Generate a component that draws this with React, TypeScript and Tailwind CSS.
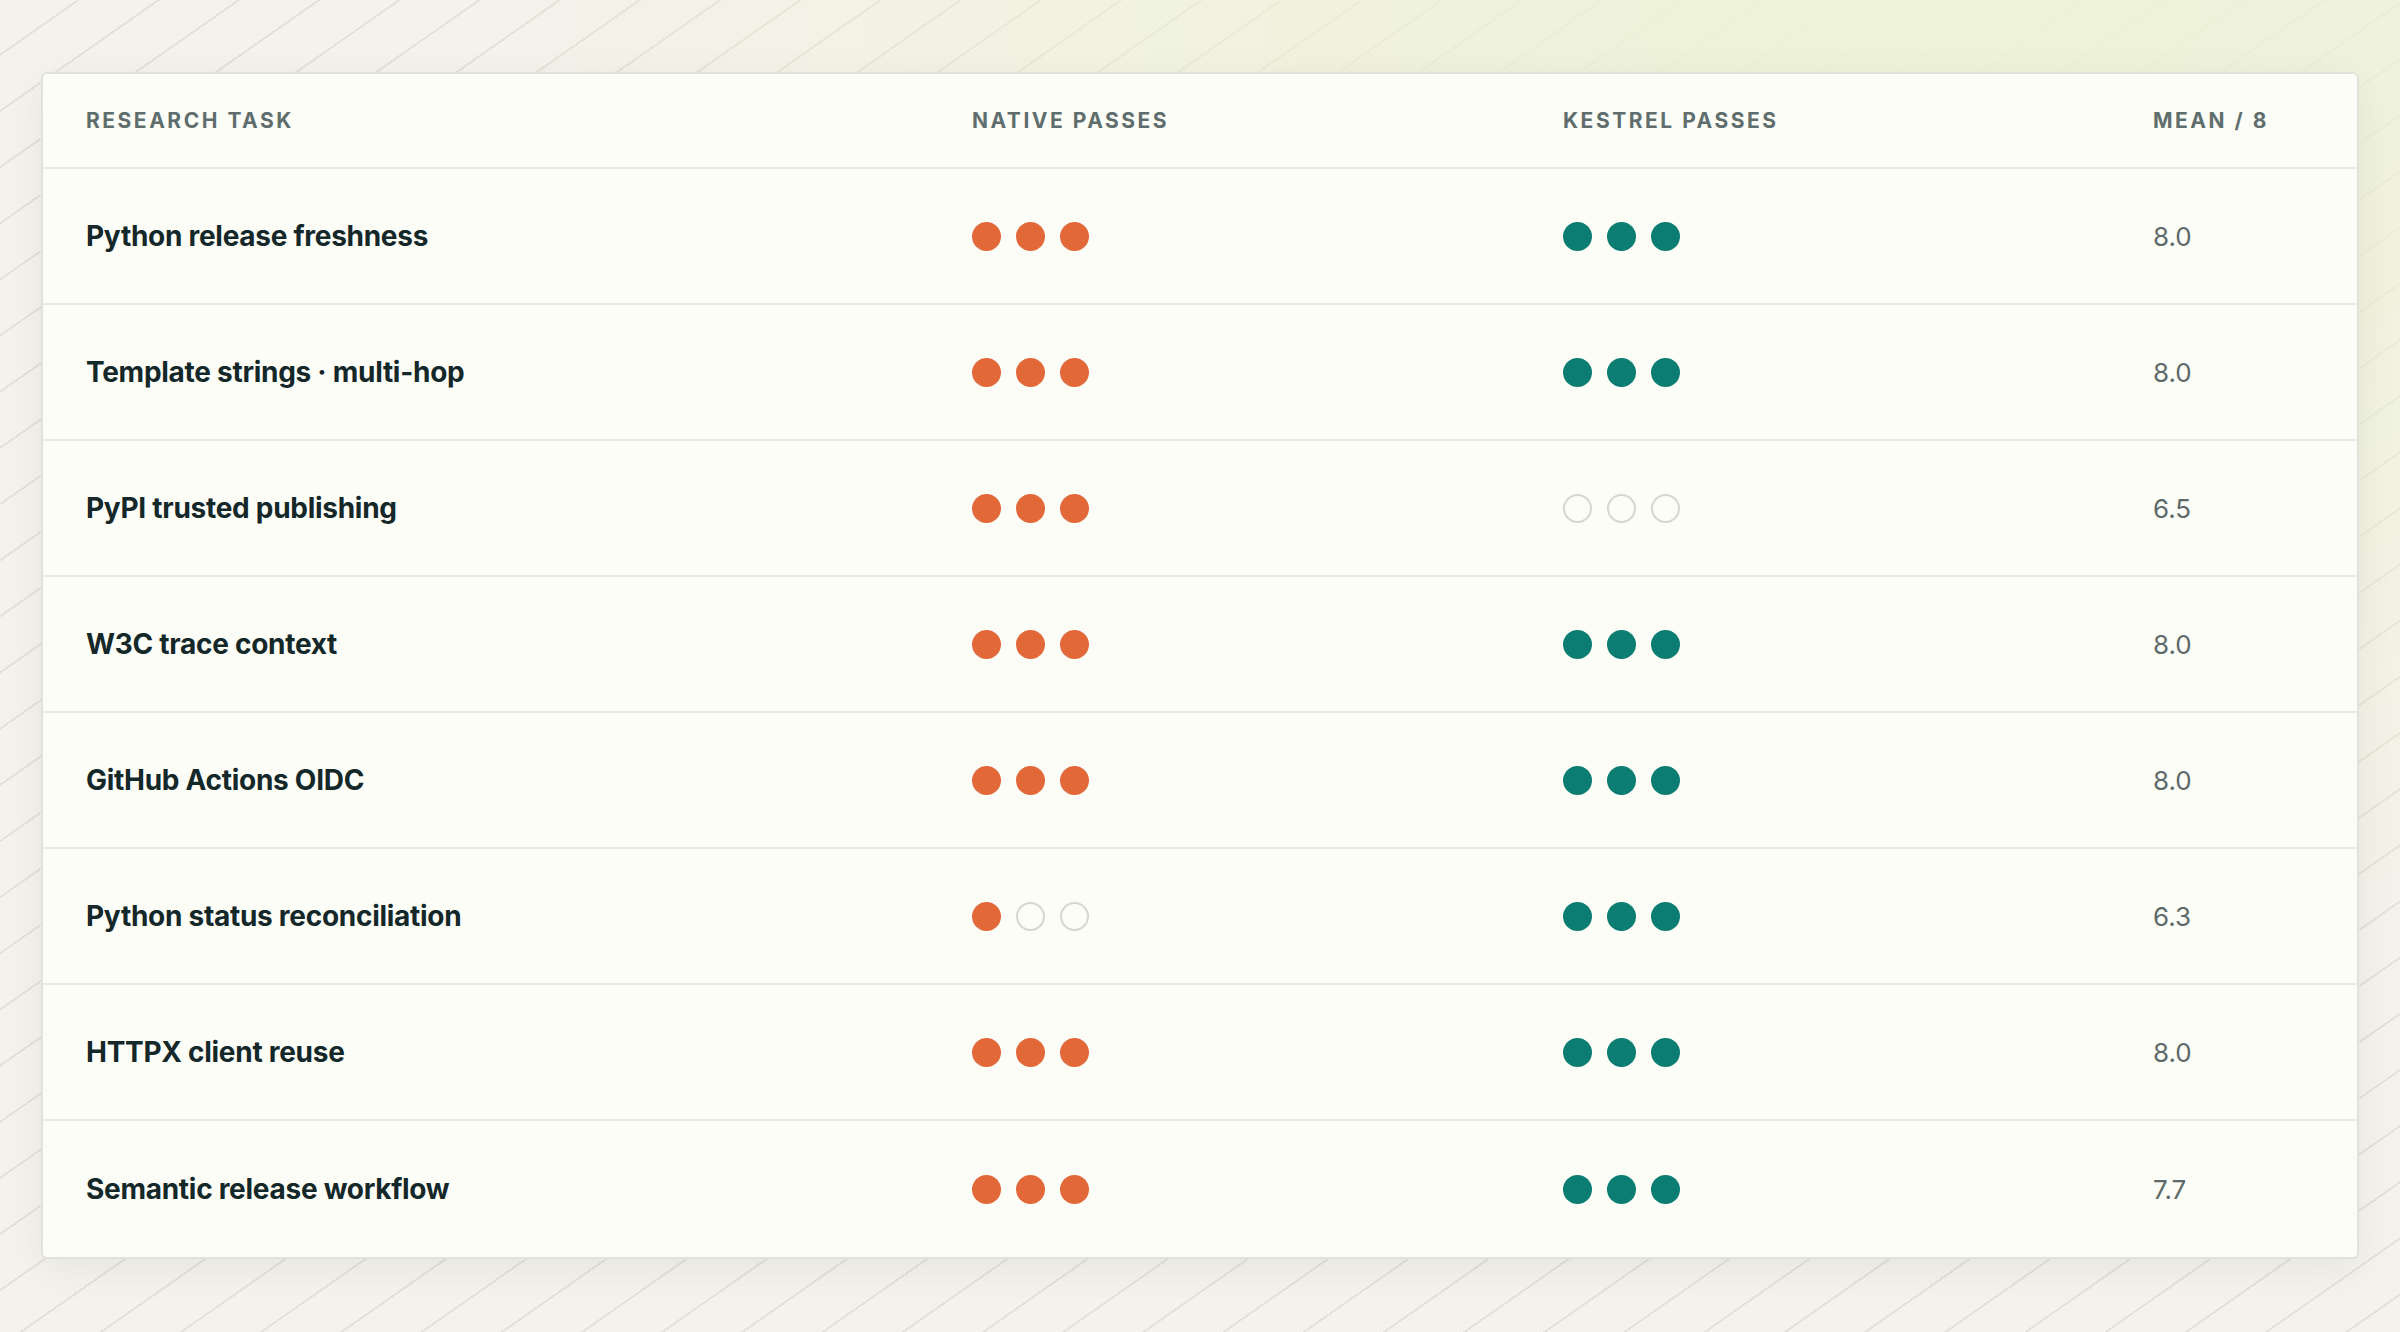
import React from "react";

const rows: [string, number, number, string][] = [
  ["Python release freshness", 3, 3, "8.0"],
  ["Template strings · multi-hop", 3, 3, "8.0"],
  ["PyPI trusted publishing", 3, 0, "6.5"],
  ["W3C trace context", 3, 3, "8.0"],
  ["GitHub Actions OIDC", 3, 3, "8.0"],
  ["Python status reconciliation", 1, 3, "6.3"],
  ["HTTPX client reuse", 3, 3, "8.0"],
  ["Semantic release workflow", 3, 3, "7.7"],
];

function Dots({ n, color }: { n: number; color: string }) {
  return (
    <div className="flex gap-[15px]">
      {[0, 1, 2].map((i) =>
        i < n ? (
          <span key={i} className="w-[29px] h-[29px] rounded-full" style={{ background: color }} />
        ) : (
          <span key={i} className="w-[29px] h-[29px] rounded-full border-2 border-[#d6d6d2]" />
        )
      )}
    </div>
  );
}

export default function App() {
  return (
    <div
      className="w-[2400px] h-[1332px] pt-[72px] px-[41px] bg-[#f4f2ec]"
      style={{ fontFamily: "Inter, 'Noto Sans', sans-serif" }}
    >
      <div className="absolute inset-0 w-[2400px] h-[1332px] pointer-events-none bg-[radial-gradient(ellipse_at_80%_0%,#eef2d6_0%,rgba(238,242,214,0.6)_25%,rgba(244,242,236,0)_55%),repeating-linear-gradient(145deg,transparent_0px,transparent_44px,rgba(150,150,130,0.18)_44px,rgba(150,150,130,0.18)_46px)]" />
      <div className="relative w-[2318px] rounded-[6px] border-2 border-[#e2e2dc] bg-[#fdfdf8] shadow-[0_10px_40px_rgba(0,0,0,0.06)] overflow-hidden">
        <div className="grid grid-cols-[886px_591px_590px_1fr] pl-[43px] h-[95px] items-center border-b-2 border-[#e9e9e4] text-[21px] font-bold tracking-[0.12em] text-[#5f6e6d]">
          <div>RESEARCH TASK</div>
          <div>NATIVE PASSES</div>
          <div>KESTREL PASSES</div>
          <div>MEAN / 8</div>
        </div>
        {rows.map(([t, a, b, m], i) => (
          <div
            key={t}
            className={`grid grid-cols-[886px_591px_590px_1fr] pl-[43px] h-[136px] items-center ${i < rows.length - 1 ? "border-b-2 border-[#e9e9e4]" : ""}`}
          >
            <div className="text-[28px] font-bold text-[#142729] tracking-[-0.01em]">{t}</div>
            <Dots n={a} color="#e2683a" />
            <Dots n={b} color="#0b7d72" />
            <div className="text-[26px] text-[#5d6a69]">{m}</div>
          </div>
        ))}
      </div>
    </div>
  );
}
